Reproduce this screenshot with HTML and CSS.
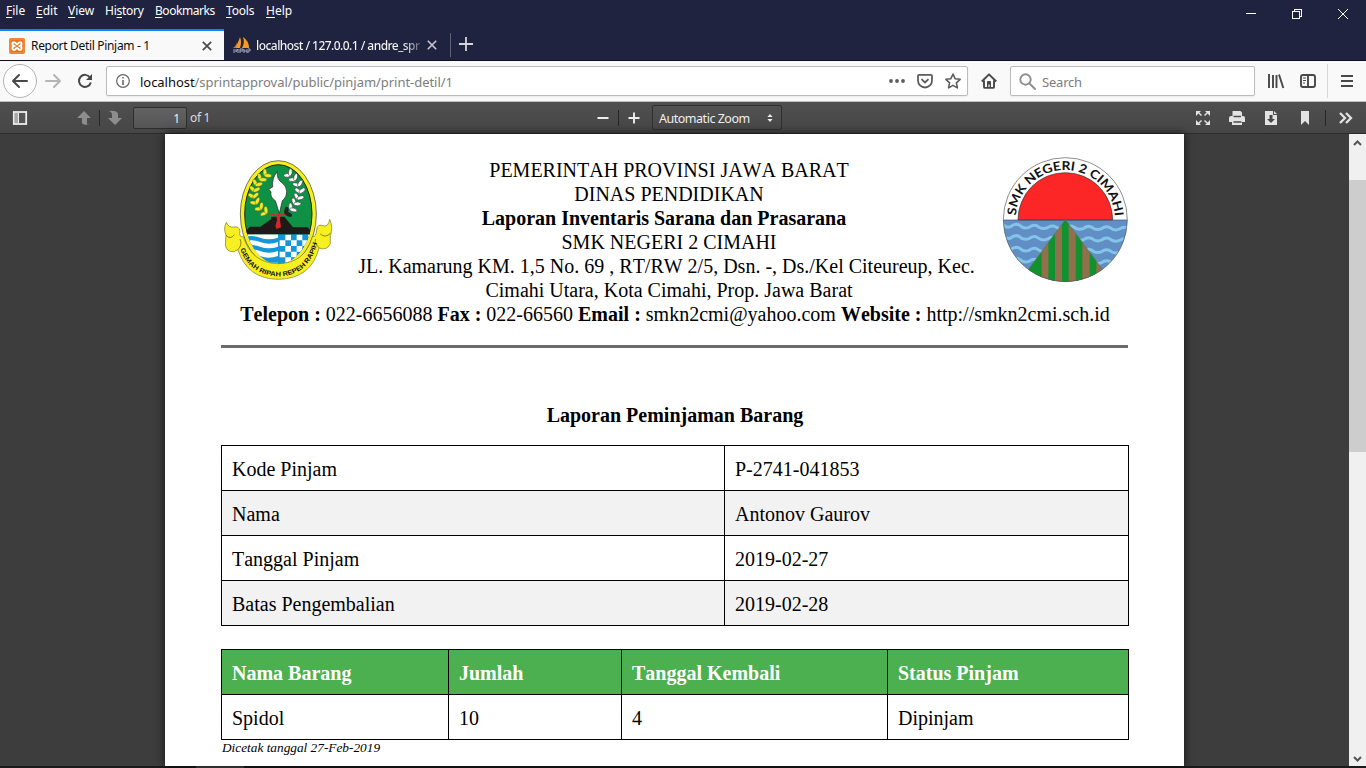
FILE: index.html
```html
<!DOCTYPE html>
<html lang="id">
<head>
<meta charset="utf-8">
<title>Report Detil Pinjam - 1</title>
<link rel="stylesheet" href="styles.css">
</head>
<body>
<header class="titlebar">
  <div class="titlebar-top">
    <nav class="menu">
      <span class="m-file"><u>F</u>ile</span><span class="m-edit"><u>E</u>dit</span><span class="m-view"><u>V</u>iew</span><span class="m-history">Hi<u>s</u>tory</span><span class="m-bookmarks"><u>B</u>ookmarks</span><span class="m-tools"><u>T</u>ools</span><span class="m-help"><u>H</u>elp</span>
    </nav>
    <svg class="window-controls" width="120" height="29" viewBox="0 0 120 29" fill="none" stroke="#fff" shape-rendering="crispEdges">
      <path d="M0 13.5h10M46.500 11.500h7v7h-7zM48.500 11v-1.500h7v7h-2"/>
      <path d="M92 9l10 10M102 9l-10 10" shape-rendering="auto"/>
    </svg>
  </div>
  <div class="tabs">
    <div class="tab tab-active">
      <svg class="favicon" width="16" height="16" viewBox="0 0 16 16"><rect width="16" height="16" rx="2" fill="#e8731f"/><rect x="1" y="1" width="14" height="14" rx="1" fill="none" stroke="#f49a56"/><path d="M5 4.200c2 0 2 2 3 2s1-2 3-2 2.300 2.800 0 3.800c2.300 1 2 3.900 0 3.900s-2-2-3-2-1 2-3 2-2.300-2.900 0-3.900c-2.300-1-2-3.800 0-3.800z" fill="none" stroke="#fff" stroke-width="2"/></svg>
      <span class="tab-title">Report Detil Pinjam - 1</span>
      <svg class="tab-close" width="10" height="10" viewBox="0 0 10 10"><path d="M.8.8l8.400 8.400M9.200.8L.8 9.200" stroke="#4a4a4a" stroke-width="1.700"/></svg>
    </div>
    <div class="tab tab-idle">
      <svg class="favicon" width="18" height="16" viewBox="0 0 18 16"><path d="M7 0q2 5 0 11H1Q5 7 7 0zM10 0q6 4 6 11H9q3-5 1-11z" fill="#f59a27"/><path d="M4 5Q3 9 0 11h3z" fill="#b97832"/><path d="M1 12v4M3 12v3l2-3v4M7 12v4M7 12h3v2H7M11 12v4M14 12v4M11 14h3M15 12h2v2h-2v2" fill="none" stroke="#a5a5bb"/></svg>
      <span class="tab-title">localhost / 127.0.0.1 / andre_spr</span>
      <svg class="tab-close" width="10" height="10" viewBox="0 0 10 10"><path d="M.8.8l8.400 8.400M9.200.8L.8 9.200" stroke="#c9c9d1" stroke-width="1.600"/></svg>
    </div>
    <svg class="new-tab" width="14" height="14" viewBox="0 0 14 14"><path d="M7 0v14M0 7h14" stroke="#d5d5dc" stroke-width="1.800"/></svg>
  </div>
</header>

<div class="navbar">
  <svg class="nav-buttons" width="106" height="40" viewBox="0 0 106 40" fill="none" stroke-linecap="round" stroke-linejoin="round">
    <circle cx="20" cy="20" r="16.500" fill="#fff" stroke="#b5b5b5"/>
    <path d="M27 20H13M19 14l-6 6 6 6" stroke="#484848" stroke-width="2"/>
    <path d="M46 20h14M54 14l6 6-6 6" stroke="#b5b5b5" stroke-width="2"/>
    <path d="M90 16.500a6 6 0 1 0 .8 5" stroke="#484848" stroke-width="2" stroke-linecap="butt"/><path d="M92 13v6h-6z" fill="#484848"/>
  </svg>
  <div class="url-box">
    <svg width="14" height="14" viewBox="0 0 14 14"><circle cx="7" cy="7" r="6.300" fill="none" stroke="#666" stroke-width="1.200"/><path d="M7 6v5M7 3v1.600" stroke="#666" stroke-width="1.600"/></svg>
    <span class="url"><b>localhost</b>/sprintapproval/public/pinjam/print-detil/1</span>
    <svg class="url-actions" width="74" height="18" viewBox="0 0 74 18" fill="none" stroke="#5c5c5c" stroke-width="1.800" stroke-linejoin="round">
      <g fill="#5c5c5c" stroke="none"><circle cx="3" cy="9" r="1.900"/><circle cx="9" cy="9" r="1.900"/><circle cx="15" cy="9" r="1.900"/></g>
      <path d="M31 2.800h12q1 0 1 1v4.700a7 7 0 0 1-14 0V3.800q0-1 1-1zM33.500 7.200l3.500 3.300 3.500-3.300"/>
      <path d="M65 2l2.100 4.700 5 .6-3.700 3.500 1 5.100-4.400-2.500-4.400 2.500 1-5.100-3.700-3.500 5-.6z" stroke-width="1.600"/>
    </svg>
  </div>
  <svg class="home" width="16" height="16" viewBox="0 0 16 16"><path d="M.8 8.500L8 1.300l7.200 7.200M3 7.500V14q0 .9 1 .9h8q1 0 1-.9V7.500" fill="none" stroke="#484848" stroke-width="1.900" stroke-linejoin="round"/><path d="M6 14V9q0-1 1-1h2q1 0 1 1v5H8.600v-2.500H7.400V14z" fill="#484848"/></svg>
  <div class="search-box">
    <svg width="17" height="17" viewBox="0 0 17 17" fill="none" stroke="#8e8e8e" stroke-width="1.900" stroke-linecap="round"><circle cx="6.500" cy="6.500" r="5.200"/><path d="M10.500 10.500L16 16"/></svg>
    <span>Search</span>
  </div>
  <svg class="nav-tools" width="98" height="40" viewBox="0 0 98 40" fill="none" stroke="#484848" stroke-width="1.900">
    <path d="M2 13v14M6 14v13M9.500 14v13M12 13.500L16.300 27"/>
    <rect x="34" y="14" width="14" height="12" rx="2"/><path d="M41 14v12"/><path d="M36 17h3M36 19.500h3M36 22h2" stroke-width="1"/>
    <path d="M60.500 3v34" stroke="#d7d7d7" stroke-width="1"/>
    <path d="M74 15h12M74 20h12M74 25h12" stroke-width="2"/>
  </svg>
</div>

<div class="pdf-toolbar">
  <svg class="pdf-left" width="133" height="32" viewBox="0 0 133 32">
    <rect x="13.800" y="10" width="12.400" height="12" fill="#555" stroke="#eee" stroke-width="1.800"/><path d="M15 11h4v10h-4z" fill="#aaa"/><path d="M18.500 11v10" stroke="#eee"/>
    <path d="M84 9l7 7h-4v6h3q-7 2-8-1v-5h-5z" fill="#8d8d8d"/>
    <path d="M99.500 8v16" stroke="#262626"/>
    <path d="M115 23l-7-7h4v-3q0-3-3-4 8-1 9 3v4h4z" fill="#8d8d8d"/>
  </svg>
  <span class="page-input">1</span><span class="page-count">of 1</span>
  <svg class="zoom-buttons" width="60" height="32" viewBox="0 0 60 32"><path d="M4.500 16h11M35.500 16h11M41 10.500v11" stroke="#eee" stroke-width="1.900"/><path d="M25.500 8v16" stroke="#262626"/></svg>
  <div class="zoom-select"><span>Automatic Zoom</span><svg width="6" height="8" viewBox="0 0 6 8" fill="#eee"><path d="M3 0l2.600 3H.4zM3 8L.4 5h5.200z"/></svg></div>
  <svg class="pdf-right" width="170" height="32" viewBox="0 0 170 32" fill="#e3e3e3">
    <path d="M0 9h5L3.400 10.600 6 13l-1 1-2.600-2.500L0 14zM14 9v5l-2.400-2.500L9 14l-1-1 2.600-2.400L9 9zM0 23v-5l2.400 2.500L5 18l1 1-2.600 2.400L5 23zM14 23H9l1.600-1.600L8 19l1-1 2.600 2.500L14 18z"/>
    <path d="M36.500 9h8l1.500 1.500V14h1q2 0 2 2v4h-3v3H36v-3h-3v-4q0-2 2-2h1.500z"/><path d="M37.500 14.500h7.500M37.500 20h8" stroke="#4b4b4b" stroke-width="1.400"/>
    <path d="M69 9h8v4h4v10H69zM78 9l3 3h-3z"/><path d="M73.500 13h3v4h2.500l-4 4-4-4h2.500z" fill="#484848"/>
    <path d="M105 9h8v14l-4-4-4 4z"/>
    <path d="M129.500 8v16" stroke="#262626"/>
    <path d="M144 11l5 5-5 5M150 11l5 5-5 5" fill="none" stroke="#e3e3e3" stroke-width="2.300"/>
  </svg>
</div>

<main class="viewer">
  <article class="page">
    <div class="letterhead">
      <svg width="125" height="140" viewBox="0 0 375 420">
        <defs>
          <clipPath id="shield"><ellipse cx="190" cy="192" rx="102" ry="150"/></clipPath>
          <path id="motto" d="M76 297Q104 377 192 379Q284 376 308 275L310 240"/>
          <g id="leaf"><ellipse cx="-8" cy="0" rx="11" ry="5.500" transform="rotate(38)"/><ellipse cx="8" cy="0" rx="11" ry="5.500" transform="rotate(-38)"/></g>
        </defs>
        <ellipse cx="190" cy="192" rx="114" ry="160" fill="#f5ee20" stroke="#33351f" stroke-width="2"/>
        <ellipse cx="190" cy="192" rx="101" ry="148" fill="#0f9145" stroke="#222" stroke-width="3"/>
        <g clip-path="url(#shield)">
          <path d="M85 253h105v95H85z" fill="#fff"/>
          <path d="M85 263q25-10 50 0t54 0v13q-27 10-54 0t-50 0zM85 290q25-10 50 0t54 0v13q-27 10-54 0t-50 0zM85 318q25-10 50 0t54 0v20H85z" fill="#1696d8"/>
          <path d="M189 253h106v95H189z" fill="#1696d8"/>
          <path d="M194 271h17v17h-17zM211 254h17v17h-17zM228 271h17v17h-17zM245 254h17v17h-17zM262 271h17v17h-17zM279 254h17v17h-17zM211 288h17v17h-17zM245 288h17v17h-17zM279 288h17v17h-17zM194 305h17v17h-17zM228 305h17v17h-17zM262 305h17v17h-17zM211 322h17v17h-17z" fill="#fff"/>
          <path d="M85 253l19-23h32l32-22v-8h40l26 32h44l18 21z" fill="#1d1a17"/>
        </g>
        <path d="M184 192h13l-2 18 3 22-13 5-4-8 5-18z" fill="#d9232a"/>
        <path d="M187 65q-3 23 15 34 12 10 13 25 0 18-13 28l-9 38-12-38q-16-9-13-27l-7-7 12-7q-3-27 14-46z" fill="#fff" stroke="#222" stroke-width="2"/>
        <g fill="#f1e92a" stroke="#465012" stroke-width="1">
          <use href="#leaf" transform="translate(151 76) rotate(45)"/><use href="#leaf" transform="translate(136 89) rotate(38)"/><use href="#leaf" transform="translate(124 105) rotate(25)"/><use href="#leaf" transform="translate(118 123) rotate(10)"/><use href="#leaf" transform="translate(116 142) rotate(-5)"/><use href="#leaf" transform="translate(124 160) rotate(-28)"/><use href="#leaf" transform="translate(138 176) rotate(-44)"/><use href="#leaf" transform="translate(154 188) rotate(-60)"/>
        </g>
        <path d="M160 191l20 4M218 191l-20 4" stroke="#d9232a" stroke-width="3"/>
        <g fill="#fff" stroke="#222" stroke-width="1.500">
          <use href="#leaf" transform="translate(225 75) rotate(-45)"/><use href="#leaf" transform="translate(240 89) rotate(-38)"/><use href="#leaf" transform="translate(251 107) rotate(-20)"/><use href="#leaf" transform="translate(255 127) rotate(0)"/><use href="#leaf" transform="translate(249 146) rotate(20)"/><use href="#leaf" transform="translate(239 162) rotate(35)"/><use href="#leaf" transform="translate(227 178) rotate(50)"/><use href="#leaf" transform="translate(213 190) rotate(60)" fill="#222"/>
        </g>
        <path d="M34 217q-10 18-1 38l-2 30q4 22 26 20l12-6q27 88 121 89 99-2 122-94 24 9 34-13v-24q9-25-2-49-4 22-16 20-22-9-23 12-1 21-13 20-22 80-102 81-80-1-105-81-15 2-10-17-3-15-18-12-16 3-23-14z" fill="#f7ef20" stroke="#7a7428" stroke-width="2"/>
        <path d="M33 256q14 14 25-2M346 250q-15 15-30 2M75 267q8 16-6 32M302 267q-6 15 11 26" fill="none" stroke="#554f20" stroke-width="2"/>
        <text class="motto"><textPath href="#motto" textLength="318" lengthAdjust="spacingAndGlyphs">GEMAH RIPAH REPEH RAPIH</textPath></text>
      </svg>
      <div class="letterhead-text">
        <p class="l1">PEMERINTAH PROVINSI JAWA BARAT</p>
        <p class="l2">DINAS PENDIDIKAN</p>
        <p class="l3">Laporan Inventaris Sarana dan Prasarana</p>
        <p class="l4">SMK NEGERI 2 CIMAHI</p>
        <p class="l5">JL. Kamarung KM. 1,5 No. 69 , RT/RW 2/5, Dsn. -, Ds./Kel Citeureup, Kec.</p>
        <p class="l6">Cimahi Utara, Kota Cimahi, Prop. Jawa Barat</p>
      </div>
      <svg width="140" height="140" viewBox="0 0 420 420">
        <defs>
          <clipPath id="disc"><circle cx="211" cy="209" r="186"/></clipPath>
          <path id="school-arc" d="M62 209A149 149 0 0 1 360 209V280"/>
          <path id="wave" d="M0 0q8 12 23 7 14-12 27-4 11 12 28 6 13-11 26-3 14 11 30 4 12-9 25-2 13 10 29 3 12-10 25-3 13 11 29 4 12-10 25-3 13 11 29 4 12-10 25-3 13 11 29 4 12-10 40 0"/>
        </defs>
        <circle cx="211" cy="209" r="186" fill="#fff"/>
        <g clip-path="url(#disc)">
          <path d="M20 210h380v190H20z" fill="#628ec6"/>
          <g fill="none" stroke="#83c5e8" stroke-width="9"><use href="#wave" x="24" y="223"/><use href="#wave" x="24" y="257"/><use href="#wave" x="24" y="292"/><use href="#wave" x="24" y="325"/></g>
          <path d="M69 210a142 142 0 0 1 284 0z" fill="#fb2625" stroke="#333" stroke-width="2"/>
          <path d="M23 210h376" stroke="#42536a" stroke-width="2"/>
          <clipPath id="hill"><path d="M211 209l112 150v50H100v-50z"/></clipPath>
          <g clip-path="url(#hill)"><path d="M95 205h240v200H95z" fill="#93704d"/><path d="M130 205v200M170 205v200M211 205v200M252 205v200M294 205v200" stroke="#10932f" stroke-width="20"/><path d="M95 205h25v200H95z" fill="#10932f"/></g>
          <path d="M100 359l111-150 112 150" fill="none" stroke="#65734b" stroke-width="2"/>
        </g>
        <circle cx="211" cy="209" r="186" fill="none" stroke="#555" stroke-width="2"/>
        <text class="school-name"><textPath href="#school-arc" startOffset="12" textLength="446" lengthAdjust="spacingAndGlyphs">SMK NEGERI 2 CIMAHI</textPath></text>
      </svg>
    </div>
    <p class="contact"><b>Telepon :</b> 022-6656088 <b>Fax :</b> 022-66560 <b>Email :</b> smkn2cmi@yahoo.com <b>Website :</b> http://smkn2cmi.sch.id</p>
    <div class="rule"></div>
    <h1>Laporan Peminjaman Barang</h1>
    <table class="detail">
      <tr><td class="label">Kode Pinjam</td><td>P-2741-041853</td></tr>
      <tr><td>Nama</td><td>Antonov Gaurov</td></tr>
      <tr><td>Tanggal Pinjam</td><td>2019-02-27</td></tr>
      <tr><td>Batas Pengembalian</td><td>2019-02-28</td></tr>
    </table>
    <table class="items">
      <tr><th class="c1">Nama Barang</th><th class="c2">Jumlah</th><th class="c3">Tanggal Kembali</th><th class="c4">Status Pinjam</th></tr>
      <tr><td>Spidol</td><td>10</td><td>4</td><td>Dipinjam</td></tr>
    </table>
    <p class="printed">Dicetak tanggal 27-Feb-2019</p>
  </article>
  <div class="scrollbar">
    <svg width="17" height="17" viewBox="0 0 17 17"><path d="M5 11l3.500-3.500L12 11" fill="none" stroke="#555" stroke-width="2"/></svg>
    <div class="thumb"></div>
    <svg width="17" height="17" viewBox="0 0 17 17"><path d="M5 8l3.500 3.500L12 8" fill="none" stroke="#555" stroke-width="2"/></svg>
  </div>
</main>
<div class="taskbar-edge"></div>
</body>
</html>
```
FILE: styles.css
```css
* { box-sizing: border-box; }
body { margin: 0; width: 1366px; height: 768px; overflow: hidden; font-family: "Noto Sans", sans-serif; background: #3d3d3d; }
svg { display: block; flex: none; }
p, h1 { margin: 0; font-size: inherit; white-space: nowrap; }

.titlebar { height: 61px; background: #202340; border-bottom: 1px solid #0d0e20; }
.titlebar-top { height: 29px; display: flex; justify-content: space-between; }
.menu { display: flex; padding-left: 6px; color: #fff; font-size: 12px; line-height: 21px; white-space: nowrap; }
.menu u { text-underline-offset: 2px; }
.m-file { width: 30px; }
.m-edit { width: 32px; }
.m-view { width: 37px; }
.m-history { width: 50px; letter-spacing: -0.25px; }
.m-bookmarks { width: 71px; letter-spacing: -0.45px; }
.m-tools { width: 40px; letter-spacing: -0.2px; }
.tabs { display: flex; height: 31px; }
.tab { display: flex; align-items: center; font-size: 12px; white-space: nowrap; }
.tab-active { width: 224px; padding: 0 12px 0 9px; background: #f9f9fa; border-top: 2px solid #0a84ff; color: #0c0c0d; letter-spacing: -0.32px; }
.tab-idle { width: 227px; height: 24px; margin-top: 4px; padding: 0 13px 0 9px; border-right: 1px solid #60627a; color: #f9f9fa; letter-spacing: -0.55px; }
.tab-title { flex: 1; margin-left: 6px; }
.tab-idle .tab-title { width: 165px; margin-left: 5px; font-weight: 500; color: transparent; background: linear-gradient(90deg, #f9f9fa 148px, #55577000 170px); -webkit-background-clip: text; background-clip: text; }
.tab-close { margin-left: 6px; }
.new-tab { margin: 8px 0 0 8px; }

.navbar { display: flex; align-items: center; height: 41px; background: #f9f9fa; border-bottom: 1px solid #bfbfbf; }
.url-box, .search-box { display: flex; align-items: center; height: 30px; background: #fff; border: 1px solid #bcbcbc; border-radius: 2px; font-size: 13px; color: #7d7d7d; box-shadow: 0 1px 2px #0001; }
.url-box { width: 862px; padding: 0 5px 0 9px; }
.url { flex: 1; margin-left: 10px; padding-top: 2px; white-space: nowrap; letter-spacing: -0.04px; }
.url b { font-weight: 400; color: #0c0c0d; }
.home { margin: 0 13px; }
.search-box { width: 245px; padding-left: 8px; }
.search-box span { margin-left: 6px; padding-top: 2px; letter-spacing: -0.2px; }
.nav-tools { margin-left: 12px; }

.pdf-toolbar { display: flex; align-items: center; height: 32px; background: linear-gradient(#4f4f4f, #464646); border-bottom: 1px solid #2c2c2c; color: #ddd; font-size: 12px; white-space: nowrap; }
.page-input { width: 54px; height: 22px; padding-right: 6px; border: 1px solid #2d2d2d; border-radius: 2px; background: linear-gradient(#626262, #555); text-align: right; line-height: 21px; color: #eee; }
.page-count { width: 406px; padding-left: 3px; letter-spacing: -0.3px; }
.zoom-buttons { margin-right: -1px; }
.zoom-select { display: flex; align-items: center; justify-content: space-between; width: 130px; height: 25px; padding: 0 8px 0 6px; border: 1px solid #303030; border-radius: 2px; background: linear-gradient(#525252, #484848); font-size: 12.500px; letter-spacing: -0.48px; color: #eee; }
.zoom-select span { padding-top: 2px; }
.pdf-right { margin-left: auto; }

.viewer { display: flex; height: 632px; padding-left: 165px; background: #3d3d3d; }
.page { width: 1019px; background: #fff; box-shadow: 0 0 9px #000b; padding-top: 16px; font-family: "Liberation Serif", serif; font-size: 20px; line-height: 24px; font-kerning: none; color: #000; overflow: hidden; }
.letterhead { display: flex; height: 152px; padding-left: 50px; }
.letterhead-text { width: 655px; padding-top: 8px; display: flex; flex-direction: column; align-items: center; }
.l1, .l2, .l4, .l6 { margin-left: 3px; }
.l3 { margin-right: 7px; font-weight: 700; }
.l5 { margin-right: 2px; }
.contact { text-align: center; padding-left: 1px; }
.rule { height: 3px; margin: 19px 56px 0; background: #6b6b6b; }
h1 { margin-top: 55px; padding-left: 1px; text-align: center; }
table { width: 908px; margin-left: 56px; border-spacing: 1px; background: #000; table-layout: fixed; }
td, th { height: 44px; padding: 1px 0 0 10px; background: #fff; text-align: left; white-space: nowrap; }
.detail { margin-top: 18px; }
.detail .label { width: 502px; }
.detail tr:nth-child(even) td { background: #f2f2f2; }
.items { margin-top: 23px; }
.items th { background: #4caf50; color: #fff; }
.c1 { width: 226px; }
.c2 { width: 172px; }
.c3 { width: 265px; }
.printed { margin-left: 57px; font-size: 13.300px; font-style: italic; line-height: 15px; }
.motto { font: 700 20px "Liberation Sans", sans-serif; fill: #111; }
.school-name { font: 700 37px Lato, sans-serif; fill: #111; }

.scrollbar { display: flex; flex-direction: column; justify-content: space-between; width: 17px; margin-left: auto; background: #f0f0f0; }
.thumb { height: 272px; margin-top: 29px; margin-bottom: auto; background: #cdcdcd; }
.taskbar-edge { height: 2px; background: linear-gradient(90deg, #1b191b 196px, #454345 196px 244px, #1b191b 244px); }
```
